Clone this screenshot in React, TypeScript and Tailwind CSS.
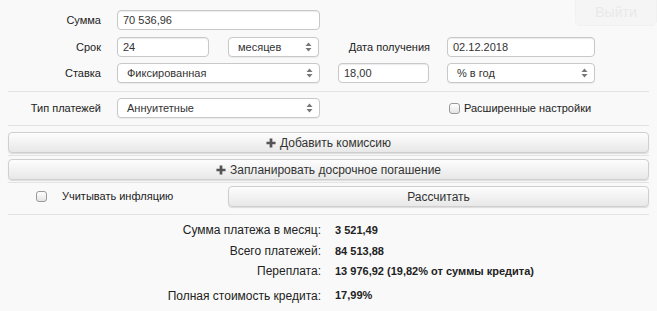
import React from "react";

const font = { fontFamily: '"Liberation Sans", Arial, sans-serif' };

const Arrows = () => (
  <svg width="7" height="10" viewBox="0 0 7 10" className="shrink-0">
    <path d="M3.5 0.5 L6.5 4 L0.5 4 Z" fill="#777" />
    <path d="M3.5 9.5 L6.5 6 L0.5 6 Z" fill="#777" />
  </svg>
);

const Input = ({ value, w }: { value: string; w: string }) => (
  <div
    className={`${w} h-[20px] flex items-center px-[5px] bg-white border border-[#c8c8c8] rounded-[4px] shadow-[inset_0_1px_1px_rgba(0,0,0,0.08)] text-[11px] text-[#333]`}
  >
    {value}
  </div>
);

const Select = ({ value, w }: { value: string; w: string }) => (
  <div
    className={`${w} h-[20px] flex items-center justify-between pl-[9px] pr-[6px] bg-white border border-[#c8c8c8] rounded-[4px] shadow-[0_1px_1px_rgba(0,0,0,0.06)] text-[11px] text-[#333]`}
  >
    <span>{value}</span>
    <Arrows />
  </div>
);

const Checkbox = () => (
  <span className="inline-block w-[11px] h-[11px] rounded-[3px] border border-[#9a9a9a] bg-gradient-to-b from-white to-[#e4e4e4]" />
);

const Button = ({ children, w }: { children: React.ReactNode; w: string }) => (
  <div
    className={`${w} h-[21px] flex items-center justify-center gap-[4px] rounded-[4px] border border-[#cfcfcf] bg-gradient-to-b from-[#fdfdfd] to-[#e8e8e8] shadow-[0_1px_1px_rgba(0,0,0,0.12)] text-[12px] text-[#333]`}
  >
    {children}
  </div>
);

const Plus = () => (
  <svg width="10" height="10" viewBox="0 0 11 11">
    <path d="M4 0.5h3v3.5h3.5v3H7v3.5H4V7H0.5V4H4z" fill="#555" />
  </svg>
);

const Line = () => <div className="h-px bg-[#e3e3e3]" />;

const Label = ({ children }: { children: React.ReactNode }) => (
  <div className="w-[93px] text-right text-[11px] text-[#222] shrink-0">{children}</div>
);

export default function App() {
  const results = [
    ["Сумма платежа в месяц:", "3 521,49"],
    ["Всего платежей:", "84 513,88"],
    ["Переплата:", "13 976,92 (19,82% от суммы кредита)"],
  ];
  return (
    <div className="relative w-[657px] h-[311px] bg-[#f9f9f9] overflow-hidden" style={font}>
      {/* faded logout button overlapping the top corner */}
      <div className="absolute right-[0px] top-[-6px] w-[82px] h-[32px] pt-[5px] rounded-[5px] bg-[#f5f5f5] border border-[#f1f1f1] flex items-center justify-center text-[14px] text-[#e9e9e9]">
        Выйти
      </div>

      <div className="w-[641px] ml-[8px] pt-[10px]">
        <div className="flex items-center gap-[16px]">
          <Label>Сумма</Label>
          <Input value="70 536,96" w="w-[203px]" />
        </div>
        <div className="flex items-center mt-[7px]">
          <Label>Срок</Label>
          <div className="ml-[16px]">
            <Input value="24" w="w-[92px]" />
          </div>
          <div className="ml-[19px]">
            <Select value="месяцев" w="w-[91px]" />
          </div>
          <div className="w-[111px] text-right text-[11px] text-[#222]">Дата получения</div>
          <div className="ml-[17px]">
            <Input value="02.12.2018" w="w-[148px]" />
          </div>
        </div>
        <div className="flex items-center mt-[6px]">
          <Label>Ставка</Label>
          <div className="ml-[16px]">
            <Select value="Фиксированная" w="w-[203px]" />
          </div>
          <div className="ml-[18px]">
            <Input value="18,00" w="w-[91px]" />
          </div>
          <div className="ml-[18px]">
            <Select value="% в год" w="w-[148px]" />
          </div>
        </div>

        <div className="mt-[8px]">
          <Line />
        </div>

        <div className="flex items-center mt-[6px] h-[20px]">
          <Label>Тип платежей</Label>
          <div className="ml-[16px]">
            <Select value="Аннуитетные" w="w-[203px]" />
          </div>
          <div className="ml-[129px] flex items-center gap-[4px] text-[11px] text-[#222]">
            <Checkbox />
            <span>Расширенные настройки</span>
          </div>
        </div>

        <div className="mt-[7px]">
          <Line />
        </div>

        <div className="mt-[6px]">
          <Button w="w-full">
            <Plus />
            <span>Добавить комиссию</span>
          </Button>
        </div>
        <div className="mt-[2px]">
          <Line />
        </div>
        <div className="mt-[3px]">
          <Button w="w-full">
            <Plus />
            <span>Запланировать досрочное погашение</span>
          </Button>
        </div>
        <div className="mt-[2px]">
          <Line />
        </div>

        <div className="flex items-center mt-[3px]">
          <div className="w-[220px] flex items-center text-[11px] text-[#222]">
            <span className="ml-[28px] flex">
              <Checkbox />
            </span>
            <span className="ml-[15px]">Учитывать инфляцию</span>
          </div>
          <Button w="flex-1">
            <span>Рассчитать</span>
          </Button>
        </div>

        <div className="mt-[7px]">
          <Line />
        </div>

        <div className="mt-[5px] text-[12px] text-[#222]">
          {results.map(([k, v]) => (
            <div key={k} className="flex items-center h-[20.5px]">
              <div className="w-[313px] text-right">{k}</div>
              <div className="ml-[14px] font-bold text-[11px]">{v}</div>
            </div>
          ))}
          <div className="flex items-center h-[20px] mt-[4px]">
            <div className="w-[313px] text-right">Полная стоимость кредита:</div>
            <div className="ml-[14px] font-bold text-[11px]">17,99%</div>
          </div>
        </div>
      </div>
    </div>
  );
}
